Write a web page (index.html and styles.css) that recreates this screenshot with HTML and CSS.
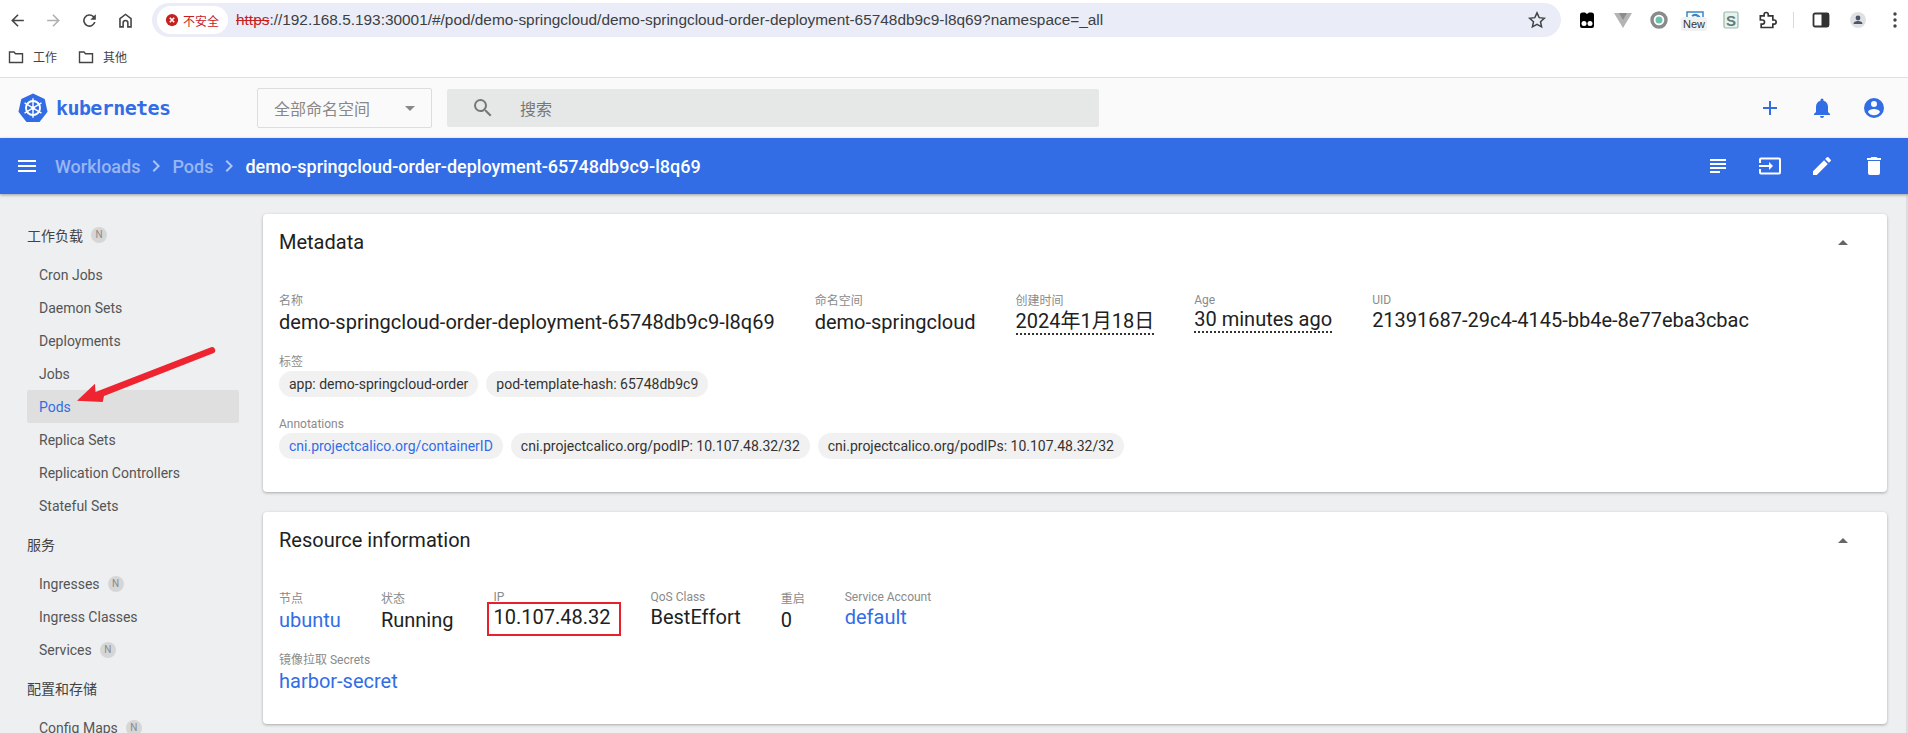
FILE: index.html
```html
<!DOCTYPE html>
<html lang="zh-CN">
<head>
    <meta charset="UTF-8">
    <title>Kubernetes Dashboard</title>
    <link rel="stylesheet" href="styles.css">
</head>
<body>
    <div class="browser-bar">
        <div class="nav-icons">
            <svg class="nav-icon" viewBox="0 0 24 24"><path d="M20 11H7.800l5.600-5.600L12 4l-8 8 8 8 1.400-1.400L7.800 13H20z"/></svg>
            <svg class="nav-icon faded" viewBox="0 0 24 24"><path d="M12 4l-1.400 1.400 5.600 5.600H4v2h12.200l-5.600 5.600L12 20l8-8z"/></svg>
            <svg class="nav-icon" viewBox="0 0 24 24"><path d="M17.600 6.400A8 8 0 1 0 19.700 14h-2.100a6 6 0 1 1-1.400-6.200L13 11h7V4z"/></svg>
            <svg class="nav-icon" viewBox="0 0 24 24"><path d="M12 3L4 9v12h6v-6a2 2 0 0 1 4 0v6h6V9zm6 16h-2v-4a4 4 0 0 0-8 0v4H6V10l6-4.500 6 4.500z"/></svg>
        </div>
        <div class="omnibox">
            <div class="not-secure">
                <svg class="warn-icon" viewBox="0 0 16 16"><circle cx="8" cy="8" r="7" fill="#c5221f"/><path d="M5.500 5.500l5 5m0-5l-5 5" stroke="#fff" stroke-width="1.800"/></svg>
                <span>不安全</span>
            </div>
            <div class="url"><span class="https">https</span>://192.168.5.193:30001/#/pod/demo-springcloud/demo-springcloud-order-deployment-65748db9c9-l8q69?namespace=_all</div>
            <svg class="star" viewBox="0 0 24 24"><path d="M12 3.500l2.600 5.700 6.200.7-4.600 4.200 1.300 6.100L12 17.100l-5.500 3.100 1.300-6.100-4.600-4.200 6.200-.7z" fill="none" stroke="#444" stroke-width="1.800"/></svg>
        </div>
        <div class="ext-icons">
            <svg class="ext" viewBox="0 0 20 20"><path d="M3 5a2.500 2.500 0 0 1 2.500-2.500h2.500l2 1.500 2-1.500h2.500A2.500 2.500 0 0 1 17 5v11a2 2 0 0 1-2 2H5a2 2 0 0 1-2-2z"/><circle cx="7" cy="13.500" r="2.500" fill="#fff"/><circle cx="13" cy="13.500" r="2.500" fill="#fff"/></svg>
            <svg class="ext" viewBox="0 0 20 20"><path d="M1 3h18l-9 15z" fill="#b4b4b4"/><path d="M6 3h8l-4 7z" fill="#8c8c8c"/></svg>
            <svg class="ext" viewBox="0 0 20 20"><circle cx="10" cy="10" r="7" fill="#fff" stroke="#8a8a8a" stroke-width="3.400"/><circle cx="10" cy="10" r="3.500" fill="#6dbfae"/></svg>
            <div class="ext-new">
                <svg class="ext" viewBox="0 0 20 20"><rect x="2" y="2" width="16" height="12" fill="#fff" stroke="#3a86c8" stroke-width="1.500"/><path d="M7 6c3-2 6-1 8 2" fill="none" stroke="#3a86c8" stroke-width="2"/></svg>
                <span class="new-tag">New</span>
            </div>
            <svg class="ext" viewBox="0 0 20 20"><rect x="3" y="2" width="14" height="16" rx="1.500" fill="#e6f3ee" stroke="#9cb8b0" stroke-width="1.200"/><text x="10" y="15.500" text-anchor="middle" class="ext-s">S</text></svg>
            <svg class="ext" viewBox="0 0 24 24"><path d="M4 7h4.500V5.500a2.500 2.500 0 0 1 5 0V7H19v5h1.500a2.500 2.500 0 0 1 0 5H19v4H5v-4h1.500a2.500 2.500 0 0 0 0-5H4z" fill="none" stroke="#333" stroke-width="2"/></svg>
            <span class="ext-sep"></span>
            <svg class="ext" viewBox="0 0 20 20"><rect x="2.500" y="3.500" width="15" height="13" rx="1.500" fill="none" stroke="#333" stroke-width="1.800"/><rect x="10.500" y="3.500" width="7" height="13" fill="#333"/></svg>
            <svg class="ext nudge" viewBox="0 0 20 20"><circle cx="10" cy="10" r="8" fill="#dfe1e5"/><circle cx="10" cy="8" r="2.400" fill="#4a5568"/><path d="M5.500 14c0-2.200 2-3 4.500-3s4.500.8 4.500 3z" fill="#4a5568"/></svg>
            <svg class="ext nudge" viewBox="0 0 20 20"><circle cx="10" cy="4" r="1.700" fill="#444"/><circle cx="10" cy="10" r="1.700" fill="#444"/><circle cx="10" cy="16" r="1.700" fill="#444"/></svg>
        </div>
    </div>
    <div class="bookmarks">
        <div class="bookmark">
            <svg class="folder" viewBox="0 0 16 16"><path d="M1.500 3h4.500l1.500 1.700h7v8.800h-13z" fill="none" stroke="#444" stroke-width="1.400"/></svg>
            <span>工作</span>
        </div>
        <div class="bookmark">
            <svg class="folder" viewBox="0 0 16 16"><path d="M1.500 3h4.500l1.500 1.700h7v8.800h-13z" fill="none" stroke="#444" stroke-width="1.400"/></svg>
            <span>其他</span>
        </div>
    </div>

    <header class="topbar">
        <div class="logo">
            <svg class="logo-mark" viewBox="0 0 32 32">
                <path d="M16 .5l12.500 6 3 13.500L23 31H9L.5 20l3-13.500z" fill="#326ce5"/>
                <g fill="none" stroke="#fff">
                    <circle cx="16" cy="16" r="7.500" stroke-width="2"/>
                    <path d="M16 5.500v21M7 10.500l18 11M25 10.500l-18 11" stroke-width="1.500"/>
                </g>
                <circle cx="16" cy="16" r="2" fill="#fff"/>
            </svg>
            <span class="logo-text">kubernetes</span>
        </div>
        <div class="ns-select">
            <span>全部命名空间</span>
            <span class="caret"></span>
        </div>
        <div class="search">
            <svg class="search-icon" viewBox="0 0 24 24"><path d="M15.500 14h-.79l-.28-.27A6.470 6.470 0 0 0 16 9.500 6.500 6.500 0 1 0 9.500 16c1.610 0 3.090-.59 4.230-1.570l.27.28v.79l5 4.990L20.490 19l-4.990-5zm-6 0C7.010 14 5 11.990 5 9.500S7.010 5 9.500 5 14 7.010 14 9.500 11.990 14 9.500 14z"/></svg>
            <span>搜索</span>
        </div>
        <div class="top-actions">
            <svg class="top-icon" viewBox="0 0 24 24"><path d="M19 13h-6v6h-2v-6H5v-2h6V5h2v6h6z"/></svg>
            <svg class="top-icon" viewBox="0 0 24 24"><path d="M12 22a2 2 0 0 0 2-2h-4a2 2 0 0 0 2 2zm6-6v-5c0-3.100-1.600-5.600-4.500-6.300V4a1.500 1.500 0 0 0-3 0v.7C7.600 5.400 6 7.900 6 11v5l-2 2v1h16v-1z"/></svg>
            <svg class="top-icon" viewBox="0 0 24 24"><path d="M12 2a10 10 0 1 0 0 20 10 10 0 0 0 0-20zm0 3a3 3 0 1 1 0 6 3 3 0 0 1 0-6zm0 14.200a7.200 7.200 0 0 1-6-3.200c0-2 4-3.100 6-3.100s6 1.100 6 3.100a7.200 7.200 0 0 1-6 3.200z"/></svg>
        </div>
    </header>

    <div class="actionbar">
        <svg class="bar-icon menu-icon" viewBox="0 0 24 24"><path d="M3 18h18v-2H3zm0-5h18v-2H3zm0-7v2h18V6z"/></svg>
        <nav class="crumbs">
            <span class="crumb">Workloads</span>
            <svg class="chevron" viewBox="0 0 24 24"><path d="M10 6L8.600 7.400 13.200 12l-4.600 4.600L10 18l6-6z"/></svg>
            <span class="crumb">Pods</span>
            <svg class="chevron" viewBox="0 0 24 24"><path d="M10 6L8.600 7.400 13.200 12l-4.600 4.600L10 18l6-6z"/></svg>
            <span class="crumb current">demo-springcloud-order-deployment-65748db9c9-l8q69</span>
        </nav>
        <div class="bar-actions">
            <svg class="bar-icon" viewBox="0 0 24 24"><path d="M14 17H4v2h10zm6-8H4v2h16zM4 15h16v-2H4zM4 5v2h16V5z"/></svg>
            <svg class="bar-icon" viewBox="0 0 24 24"><path d="M21 3.500H3a2 2 0 0 0-2 2V9h2V5.500h18v13H3V15H1v3.500a2 2 0 0 0 2 2h18a2 2 0 0 0 2-2v-13a2 2 0 0 0-2-2zM11 16l4-4-4-4v3H1v2h10z"/></svg>
            <svg class="bar-icon" viewBox="0 0 24 24"><path d="M3 17.250V21h3.750L17.800 9.940l-3.750-3.750zM20.700 7.040a1 1 0 0 0 0-1.410l-2.340-2.340a1 1 0 0 0-1.410 0l-1.830 1.830 3.750 3.750z"/></svg>
            <svg class="bar-icon" viewBox="0 0 24 24"><path d="M6 19a2 2 0 0 0 2 2h8a2 2 0 0 0 2-2V7H6zM19 4h-3.500l-1-1h-5l-1 1H5v2h14z"/></svg>
        </div>
    </div>

    <div class="content">
        <aside class="sidebar">
            <div class="side-title">工作负载 <span class="ns-badge">N</span></div>
            <a class="side-item">Cron Jobs</a>
            <a class="side-item">Daemon Sets</a>
            <a class="side-item">Deployments</a>
            <a class="side-item">Jobs</a>
            <a class="side-item active">Pods</a>
            <a class="side-item">Replica Sets</a>
            <a class="side-item">Replication Controllers</a>
            <a class="side-item">Stateful Sets</a>
            <div class="side-title">服务</div>
            <a class="side-item">Ingresses <span class="ns-badge">N</span></a>
            <a class="side-item">Ingress Classes</a>
            <a class="side-item">Services <span class="ns-badge">N</span></a>
            <div class="side-title">配置和存储</div>
            <a class="side-item">Config Maps <span class="ns-badge">N</span></a>
        </aside>

        <main class="cards">
            <section class="card card-meta">
                <div class="card-head">
                    <h2>Metadata</h2>
                    <span class="collapse"></span>
                </div>
                <div class="fields">
                    <div class="field">
                        <div class="label">名称</div>
                        <div class="value">demo-springcloud-order-deployment-65748db9c9-l8q69</div>
                    </div>
                    <div class="field">
                        <div class="label">命名空间</div>
                        <div class="value">demo-springcloud</div>
                    </div>
                    <div class="field">
                        <div class="label">创建时间</div>
                        <div class="value dotted">2024年1月18日</div>
                    </div>
                    <div class="field">
                        <div class="label latin">Age</div>
                        <div class="value dotted">30 minutes ago</div>
                    </div>
                    <div class="field">
                        <div class="label latin">UID</div>
                        <div class="value">21391687-29c4-4145-bb4e-8e77eba3cbac</div>
                    </div>
                </div>
                <div class="chip-block">
                    <div class="label">标签</div>
                    <div class="chips">
                        <span class="chip">app: demo-springcloud-order</span>
                        <span class="chip">pod-template-hash: 65748db9c9</span>
                    </div>
                </div>
                <div class="chip-block">
                    <div class="label">Annotations</div>
                    <div class="chips">
                        <span class="chip link">cni.projectcalico.org/containerID</span>
                        <span class="chip">cni.projectcalico.org/podIP: 10.107.48.32/32</span>
                        <span class="chip">cni.projectcalico.org/podIPs: 10.107.48.32/32</span>
                    </div>
                </div>
            </section>

            <section class="card card-res">
                <div class="card-head">
                    <h2>Resource information</h2>
                    <span class="collapse"></span>
                </div>
                <div class="fields">
                    <div class="field">
                        <div class="label">节点</div>
                        <div class="value link">ubuntu</div>
                    </div>
                    <div class="field">
                        <div class="label">状态</div>
                        <div class="value">Running</div>
                    </div>
                    <div class="field">
                        <div class="label latin">IP</div>
                        <div class="value ip-box">10.107.48.32</div>
                    </div>
                    <div class="field">
                        <div class="label latin">QoS Class</div>
                        <div class="value">BestEffort</div>
                    </div>
                    <div class="field">
                        <div class="label">重启</div>
                        <div class="value">0</div>
                    </div>
                    <div class="field">
                        <div class="label latin">Service Account</div>
                        <div class="value link">default</div>
                    </div>
                </div>
                <div class="field secrets">
                    <div class="label">镜像拉取 Secrets</div>
                    <div class="value link">harbor-secret</div>
                </div>
            </section>
        </main>
    </div>

    <svg class="arrow" viewBox="0 0 142 60"><path d="M2 55.700L20 38.700l.5 8.300L136 2.300a3.200 3.200 0 0 1 2.800 5.700L29 51l-1.300 6z" fill="#ee2430"/></svg>
</body>
</html>
```

FILE: styles.css
```css
* {
    margin: 0;
    padding: 0;
    box-sizing: border-box;
}
:root {
    --primary-color: #326de6;
    --page-background: #edeff1;
    --text-color: #212121;
    --muted-color: #8a8a8a;
    --cjk: "Noto Sans CJK SC";
}
html, body {
    height: 733px;
    overflow: hidden;
}
body {
    position: relative;
    font-family: Roboto, var(--cjk), sans-serif;
    font-size: 14px;
    color: var(--text-color);
    background-color: var(--page-background);
}

/* browser chrome */
.browser-bar {
    display: flex;
    align-items: center;
    height: 40px;
    background-color: white;
}
.nav-icons {
    display: flex;
    align-items: center;
    gap: 17px;
    padding-left: 8px;
    width: 152px;
}
.nav-icon {
    width: 19px;
    height: 19px;
    fill: #454545;
}
.nav-icon.faded {
    fill: #b0b0b0;
}
.omnibox {
    display: flex;
    align-items: center;
    width: 1409px;
    height: 34px;
    padding: 0 14px 0 5px;
    border-radius: 17px;
    background-color: #eaedf7;
}
.not-secure {
    display: flex;
    align-items: center;
    gap: 4px;
    height: 28px;
    padding: 0 9px 0 8px;
    border-radius: 14px;
    font-size: 12px;
    color: #c5221f;
    background-color: white;
}
.warn-icon {
    width: 14px;
    height: 14px;
}
.url {
    flex: 1;
    margin-left: 8px;
    font-family: "Liberation Sans", sans-serif;
    font-size: 15.400px;
    color: #3c4043;
}
.https {
    color: #c5221f;
    text-decoration: line-through;
}
.star {
    width: 20px;
    height: 20px;
}
.ext-icons {
    display: flex;
    align-items: center;
    gap: 16px;
    padding-left: 16px;
}
.ext {
    display: block;
    width: 20px;
    height: 20px;
}
.ext.nudge {
    margin-left: 1px;
}
.ext-new {
    position: relative;
}
.new-tag {
    position: absolute;
    left: -4px;
    top: 7px;
    padding: 0 2px;
    border-radius: 3px;
    font-family: "Liberation Sans", sans-serif;
    font-size: 11px;
    line-height: 14px;
    color: #333;
    background-color: #f1f1f1;
}
.ext-s {
    font-family: "Liberation Sans", sans-serif;
    font-size: 15px;
    font-weight: 700;
    fill: #607d7a;
}
.ext-sep {
    width: 1px;
    height: 16px;
    margin-right: 1px;
    background-color: #c8dcf5;
}
.bookmarks {
    display: flex;
    align-items: center;
    gap: 21px;
    height: 38px;
    padding: 0 0 4px 8px;
    border-bottom: 1px solid #dfdfdf;
    background-color: white;
}
.bookmark {
    display: flex;
    align-items: center;
    gap: 9px;
    font-size: 12px;
    color: #444;
}
.folder {
    width: 16px;
    height: 16px;
}

/* app toolbar */
.topbar {
    display: flex;
    align-items: center;
    height: 60px;
    background-color: #fafafa;
}
.logo {
    display: flex;
    align-items: center;
    gap: 8px;
    width: 257px;
    padding-left: 18px;
}
.logo-mark {
    width: 30px;
    height: 30px;
}
.logo-text {
    font-family: "DejaVu Sans Mono", monospace;
    font-size: 20px;
    font-weight: 700;
    letter-spacing: -.6px;
    color: var(--primary-color);
}
.ns-select {
    display: flex;
    align-items: center;
    justify-content: space-between;
    width: 175px;
    height: 40px;
    padding: 0 16px;
    border: 1px solid #ddd;
    border-radius: 2px;
    font-size: 16px;
    color: #888;
}
.caret {
    border-left: 5px solid transparent;
    border-right: 5px solid transparent;
    border-top: 5px solid #888;
}
.search {
    display: flex;
    align-items: center;
    gap: 25px;
    width: 652px;
    height: 38px;
    margin-left: 15px;
    padding-left: 24px;
    border-radius: 2px;
    font-size: 16px;
    color: #777;
    background-color: #e6e8e8;
}
.search-icon {
    width: 24px;
    height: 24px;
    fill: #777;
}
.top-actions {
    display: flex;
    gap: 28px;
    margin-left: auto;
    padding-right: 22px;
}
.top-icon {
    width: 24px;
    height: 24px;
    fill: var(--primary-color);
}

/* blue action bar */
.actionbar {
    position: relative;
    display: flex;
    align-items: center;
    height: 56px;
    padding-left: 15px;
    color: white;
    background-color: var(--primary-color);
    box-shadow: 0 1px 3px rgba(0, 0, 0, .35);
}
.bar-icon {
    width: 24px;
    height: 24px;
    fill: white;
}
.crumbs {
    display: flex;
    align-items: center;
    gap: 4px;
    margin-left: 16px;
    font-size: 18px;
    font-weight: 500;
}
.crumb {
    color: rgba(255, 255, 255, .5);
}
.crumb.current {
    color: white;
}
.chevron {
    width: 24px;
    height: 24px;
    fill: rgba(255, 255, 255, .6);
}
.bar-actions {
    display: flex;
    gap: 28px;
    margin-left: auto;
    padding-right: 22px;
}

/* page body */
.content {
    display: flex;
    height: 539px;
    border-right: 2px solid #dcdde0;
}
.sidebar {
    flex: none;
    width: 212px;
    margin-left: 27px;
    padding-top: 24px;
}
.side-title {
    display: flex;
    align-items: center;
    gap: 8px;
    height: 33px;
    margin-bottom: 7px;
    color: #424242;
}
.side-item + .side-title {
    margin-top: 5px;
}
.side-item {
    display: flex;
    align-items: center;
    gap: 8px;
    height: 33px;
    padding-left: 12px;
    color: #555;
}
.side-item.active {
    border-radius: 2px;
    color: var(--primary-color);
    background-color: #dfdfdf;
}
.ns-badge {
    display: inline-flex;
    align-items: center;
    justify-content: center;
    width: 16px;
    height: 16px;
    border-radius: 50%;
    font-size: 10px;
    color: #8a8a8a;
    background-color: #d6d6d6;
}
.cards {
    display: flex;
    flex: 1;
    flex-direction: column;
    gap: 20px;
    padding: 20px 19px 0 24px;
}
.card {
    flex: none;
    padding: 0 16px;
    border-radius: 4px;
    background-color: white;
    box-shadow: 0 1px 3px rgba(0, 0, 0, .3);
}
.card-meta {
    height: 278px;
}
.card-res {
    height: 212px;
}
.card-head {
    display: flex;
    align-items: center;
    justify-content: space-between;
    height: 56px;
    padding-right: 23px;
}
.card-head h2 {
    font-size: 20px;
    font-weight: 400;
}
.collapse {
    border-left: 5px solid transparent;
    border-right: 5px solid transparent;
    border-bottom: 5px solid #666;
}
.fields {
    display: flex;
    align-items: flex-start;
    gap: 40px;
    margin-top: 23px;
    margin-bottom: 3px;
}
.label {
    font-size: 12px;
    line-height: 16px;
    color: var(--muted-color);
}
.label.latin {
    line-height: 14px;
}
.value {
    font-size: 20px;
    line-height: 26px;
}
.value.link, .chip.link {
    color: var(--primary-color);
}
.dotted {
    display: inline-block;
    border-bottom: 2px dotted #333;
    line-height: 24px;
}
.chip-block {
    margin-top: 19px;
}
.chips {
    display: flex;
    gap: 8px;
    margin-top: 1px;
}
.chip {
    height: 26px;
    padding: 0 10px;
    border-radius: 13px;
    line-height: 26px;
    font-size: 14px;
    color: #333;
    background-color: #f1f1f1;
}
.card-res .fields {
    margin-top: 23px;
}
.card-res .label.latin {
    margin-top: -1px;
}
/* red box is a mark drawn over the value, it takes no room */
.ip-box {
    position: relative;
}
.ip-box::after {
    content: "";
    position: absolute;
    inset: -2px -11px -6px -6px;
    border: 2px solid #e8202c;
}
.secrets {
    margin-top: 19px;
}

/* annotation drawn over the screenshot */
.arrow {
    position: absolute;
    left: 75px;
    top: 345px;
    width: 142px;
    height: 60px;
}
```
